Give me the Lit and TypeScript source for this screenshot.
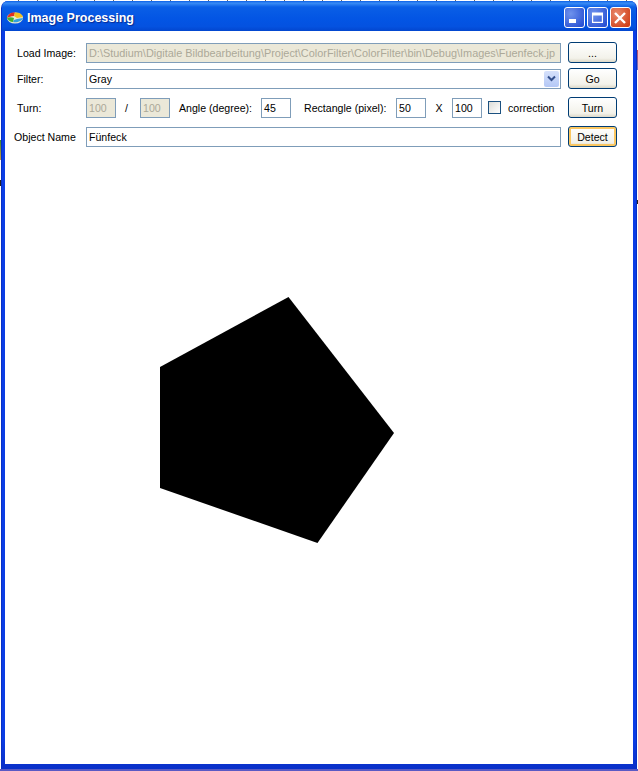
import { LitElement, html, css } from "lit";
import { customElement } from "lit/decorators.js";

@customElement("app-root")
export class AppRoot extends LitElement {
  static styles = css`
    :host {
      display: block; width: 638px; height: 771px; overflow: hidden;
      font-family: "Liberation Sans", Arial, sans-serif; font-size: 10.6px; color: #000;
      background:
        linear-gradient(#5a5ac4, #5a5ac4) 0 100% / 100% 2px no-repeat,
        linear-gradient(#3a8a30, #d09a40) 0 140px / 1px 20px no-repeat,
        linear-gradient(#222, #222) 0 180px / 1px 6px no-repeat,
        linear-gradient(#c05060, #6070d0) 637px 50px / 1px 20px no-repeat,
        linear-gradient(#222, #222) 637px 200px / 1px 4px no-repeat,
        repeating-linear-gradient(90deg, #fff 0 18px, #666 18px 19px) 0 0 / 100% 1px no-repeat,
        #fff;
    }
    .window { width: 636px; height: 768px; margin: 1px 0 0 1px; box-sizing: border-box; display: flex; flex-direction: column; background: linear-gradient(#0b3de6 96%, #0a30c8); border-radius: 7px 7px 0 0; border-left: 1px solid #0830c4; border-right: 1px solid #0830c4; }
    .title { height: 30px; box-sizing: border-box; flex: none; display: flex; align-items: center; padding: 3px 5px 0 5px; border-radius: 6px 6px 0 0; background: linear-gradient(#0a5fe8 0%, #3a8df5 7%, #0a5fe6 20%, #0355e4 60%, #0452e0 85%, #0246cf 100%); }
    .app-icon { width: 16px; height: 12px; margin-right: 4px; flex: none; }
    .title-text { flex: 1; color: #fff; font-weight: bold; font-size: 12.5px; text-shadow: 1px 1px 1px #0a2a90; }
    .ctl { width: 21px; height: 21px; box-sizing: border-box; border: 1px solid #fff; border-radius: 3px; margin-left: 2px; display: flex; background: radial-gradient(circle at 30% 30%, #6f92ec, #2a52d4 85%); }
    .ctl.close { background: radial-gradient(circle at 30% 30%, #e98a6c, #d0401a 85%); }
    .ctl svg { width: 19px; height: 19px; }
    .client { flex: 1; min-height: 0; margin: 0 3px 5px 3px; background: #fff; display: flex; flex-direction: column; }
    .form { padding: 11px 0 0 12px; display: flex; flex-direction: column; flex: none; }
    .row { display: grid; grid-template-columns: 69px 482px 49px; align-items: center; height: 21px; margin-bottom: 8px; }
    .row.tight { margin-bottom: 5px; }
    .row.last { margin-bottom: 0; }
    .field { width: 475px; }
    .nudge { margin-left: -3px; white-space: nowrap; }
    .input { box-sizing: border-box; height: 20px; border: 1px solid #7f9db9; background: #fff; padding: 0 2px; line-height: 18px; white-space: nowrap; overflow: hidden; }
    .input.off { background: #ebe8d8; color: #aca899; }
    .path { font-size: 10.9px; }
    .combo { display: flex; justify-content: space-between; align-items: center; padding-right: 1px; }
    .arrow { width: 15px; height: 16px; border-radius: 2px; background: linear-gradient(#d6e1fb, #b4c8f6); display: flex; align-items: center; justify-content: center; }
    .btn { box-sizing: border-box; width: 49px; height: 21px; border: 1px solid #003c74; border-radius: 3px; background: linear-gradient(#fff, #f3f2ea 80%, #dcd8c8); display: flex; align-items: center; justify-content: center; }
    .btn.def { box-shadow: inset 0 0 0 2px #fbc761; }
    .mid { display: flex; align-items: center; white-space: nowrap; width: 475px; }
    .w30 { width: 30px; flex: none; }
    .slash { width: 24px; text-align: center; flex: none; box-sizing: border-box; padding-right: 3px; }
    .angle { width: 91px; padding-left: 9px; box-sizing: border-box; flex: none; }
    .rect { width: 105px; padding-left: 13px; box-sizing: border-box; flex: none; }
    .x { width: 26px; text-align: center; flex: none; }
    .check { width: 13px; height: 13px; box-sizing: border-box; border: 1px solid #1c5180; background: linear-gradient(135deg, #dcdcd7, #fff); flex: none; margin: 0 7px 0 6px; }
    .canvas { flex: 1; min-height: 0; display: block; width: 628px; }
  `;

  render() {
    return html`
      <div class="window">
        <div class="title">
          <svg class="app-icon" viewBox="0 0 16 12">
            <ellipse cx="8" cy="6" rx="8" ry="5.5" fill="#e8e8d0"></ellipse>
            <path d="M0 6C1 2 4 0 8 .5L7 4C4 4 2 5 0 6Z" fill="#e03020"></path>
            <path d="M8 .5C12 0 15 2 16 5L10 6 7 4Z" fill="#f0c020"></path>
            <path d="M0 6C2 5 5 5 7 6L6 10C3 10 1 8 0 6Z" fill="#40b030"></path>
            <path d="M6 10C10 11 15 9 16 6L10 7 7 8Z" fill="#30a0e0"></path>
          </svg>
          <div class="title-text">Image Processing</div>
          <div class="ctl"><svg viewBox="0 0 19 19"><rect x="4" y="11" width="7" height="4" fill="#fff"></rect></svg></div>
          <div class="ctl"><svg viewBox="0 0 19 19"><path d="M4 4.500h11v10.500H4zM5.200 7.500v6.300h8.600V7.500z" fill="#fff" fill-rule="evenodd"></path></svg></div>
          <div class="ctl close"><svg viewBox="0 0 19 19"><path d="M4 5l10 10M14 5L4 15" stroke="#fff" stroke-width="2.400" fill="none"></path></svg></div>
        </div>
        <div class="client">
          <div class="form">
            <div class="row tight">
              <span>Load Image:</span>
              <div class="input off field path">D:\\Studium\\Digitale Bildbearbeitung\\Project\\ColorFilter\\ColorFilter\\bin\\Debug\\Images\\Fuenfeck.jp</div>
              <div class="btn">...</div>
            </div>
            <div class="row">
              <span>Filter:</span>
              <div class="input combo field"><span>Gray</span>
                <span class="arrow"><svg width="9" height="7" viewBox="0 0 9 7"><path d="M1 1.500l3.500 3.500L8 1.500" stroke="#34508c" stroke-width="2" fill="none"></path></svg></span>
              </div>
              <div class="btn">Go</div>
            </div>
            <div class="row">
              <span>Turn:</span>
              <div class="mid">
                <div class="input off w30">100</div>
                <span class="slash">/</span>
                <div class="input off w30">100</div>
                <span class="angle">Angle (degree):</span>
                <div class="input w30">45</div>
                <span class="rect">Rectangle (pixel):</span>
                <div class="input w30">50</div>
                <span class="x">X</span>
                <div class="input w30">100</div>
                <span class="check"></span>
                <span>correction</span>
              </div>
              <div class="btn">Turn</div>
            </div>
            <div class="row last">
              <span class="nudge">Object Name</span>
              <div class="input field">Fünfeck</div>
              <div class="btn def">Detect</div>
            </div>
          </div>
          <svg class="canvas" viewBox="0 0 628 617" preserveAspectRatio="xMinYMin">
            <polygon points="283.500,150 389,286 312.500,396 155,341 155,220" fill="#000"></polygon>
          </svg>
        </div>
      </div>
    `;
  }
}
